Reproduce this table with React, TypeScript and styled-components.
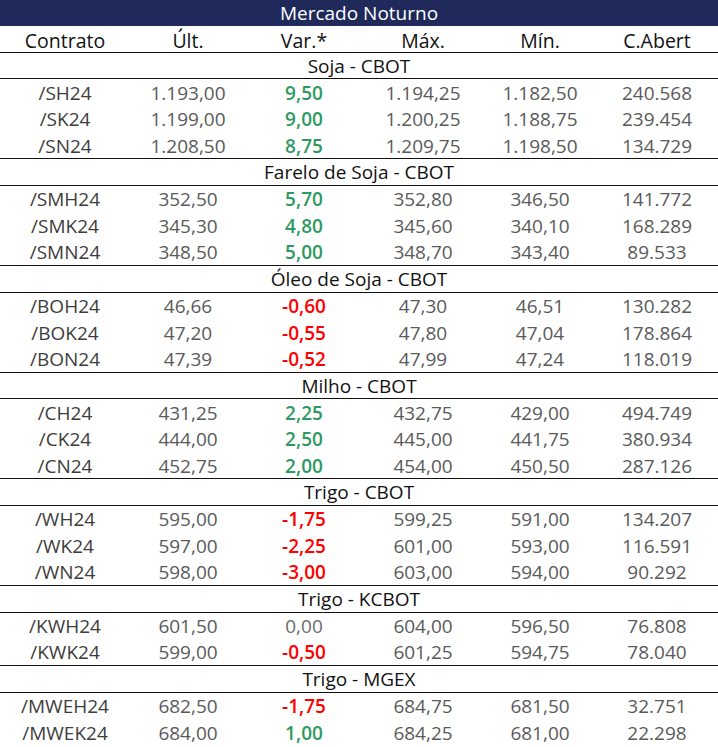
import styled, { createGlobalStyle } from 'styled-components';

const GlobalStyle = createGlobalStyle`
  html, body {
    margin: 0;
    padding: 0;
    background: #fff;
  }
  body {
    font-family: "Open Sans", "Liberation Sans", sans-serif;
  }
`;

type Row = [string, string, string, string, string, string];

const sections: { title: string; rows: Row[] }[] = [
  {
    title: 'Soja - CBOT',
    rows: [
      ['/SH24', '1.193,00', '9,50', '1.194,25', '1.182,50', '240.568'],
      ['/SK24', '1.199,00', '9,00', '1.200,25', '1.188,75', '239.454'],
      ['/SN24', '1.208,50', '8,75', '1.209,75', '1.198,50', '134.729'],
    ],
  },
  {
    title: 'Farelo de Soja - CBOT',
    rows: [
      ['/SMH24', '352,50', '5,70', '352,80', '346,50', '141.772'],
      ['/SMK24', '345,30', '4,80', '345,60', '340,10', '168.289'],
      ['/SMN24', '348,50', '5,00', '348,70', '343,40', '89.533'],
    ],
  },
  {
    title: 'Óleo de Soja - CBOT',
    rows: [
      ['/BOH24', '46,66', '-0,60', '47,30', '46,51', '130.282'],
      ['/BOK24', '47,20', '-0,55', '47,80', '47,04', '178.864'],
      ['/BON24', '47,39', '-0,52', '47,99', '47,24', '118.019'],
    ],
  },
  {
    title: 'Milho - CBOT',
    rows: [
      ['/CH24', '431,25', '2,25', '432,75', '429,00', '494.749'],
      ['/CK24', '444,00', '2,50', '445,00', '441,75', '380.934'],
      ['/CN24', '452,75', '2,00', '454,00', '450,50', '287.126'],
    ],
  },
  {
    title: 'Trigo - CBOT',
    rows: [
      ['/WH24', '595,00', '-1,75', '599,25', '591,00', '134.207'],
      ['/WK24', '597,00', '-2,25', '601,00', '593,00', '116.591'],
      ['/WN24', '598,00', '-3,00', '603,00', '594,00', '90.292'],
    ],
  },
  {
    title: 'Trigo - KCBOT',
    rows: [
      ['/KWH24', '601,50', '0,00', '604,00', '596,50', '76.808'],
      ['/KWK24', '599,00', '-0,50', '601,25', '594,75', '78.040'],
    ],
  },
  {
    title: 'Trigo - MGEX',
    rows: [
      ['/MWEH24', '682,50', '-1,75', '684,75', '681,50', '32.751'],
      ['/MWEK24', '684,00', '1,00', '684,25', '681,00', '22.298'],
    ],
  },
];

const ROW_H = '26.68px';

const Board = styled.div`
  width: 718px;
  height: 747px;
  display: flex;
  flex-direction: column;
  overflow: hidden;
  font-size: 19px;
  line-height: 1;
`;

const TitleBar = styled.div`
  height: 26px;
  flex: none;
  background: #1f2a5b;
  color: #fff;
  display: flex;
  align-items: center;
  justify-content: center;
  font-size: 19px;
  padding-top: 1px;
  box-sizing: border-box;
`;

const Grid = styled.div<{ $line?: boolean }>`
  display: grid;
  grid-template-columns: 130px 116px 116px 122px 112px 122px;
  height: ${ROW_H};
  flex: none;
  box-sizing: border-box;
  align-items: center;
  border-bottom: ${(p) => (p.$line ? '1px solid #111' : 'none')};
`;

const HeadCell = styled.div`
  text-align: center;
  color: #111;
  font-size: 19.5px;
  padding-top: 3px;
`;

const SectionTitle = styled.div`
  height: ${ROW_H};
  flex: none;
  box-sizing: border-box;
  border-bottom: 1px solid #111;
  display: flex;
  align-items: center;
  justify-content: center;
  color: #111;
  padding-top: 1px;
`;

const Cell = styled.div<{ $tone?: 'code' | 'num' | 'up' | 'down' | 'flat' }>`
  text-align: center;
  padding-top: 1px;
  color: ${(p) =>
    p.$tone === 'code'
      ? '#3d3d3d'
      : p.$tone === 'up'
        ? '#2e9a62'
        : p.$tone === 'down'
          ? '#ff0000'
          : p.$tone === 'flat'
            ? '#6b6b6b'
            : '#5a5a5a'};
  font-weight: ${(p) => (p.$tone === 'up' || p.$tone === 'down' ? 600 : 400)};
`;

const varTone = (v: string) => {
  if (v.startsWith('-')) return 'down';
  if (v === '0,00') return 'flat';
  return 'up';
};

export default function App() {
  return (
    <>
      <GlobalStyle />
      <Board>
        <TitleBar>Mercado Noturno</TitleBar>
        <Grid $line>
          {['Contrato', 'Últ.', 'Var.*', 'Máx.', 'Mín.', 'C.Abert'].map((h) => (
            <HeadCell key={h}>{h}</HeadCell>
          ))}
        </Grid>
        {sections.map((s, si) => (
          <div key={s.title} style={{ display: 'contents' }}>
            <SectionTitle>{s.title}</SectionTitle>
            {s.rows.map((r, ri) => (
              <Grid key={r[0]} $line={ri === s.rows.length - 1 && si < sections.length - 1}>
                <Cell $tone="code">{r[0]}</Cell>
                <Cell>{r[1]}</Cell>
                <Cell $tone={varTone(r[2])}>{r[2]}</Cell>
                <Cell>{r[3]}</Cell>
                <Cell>{r[4]}</Cell>
                <Cell>{r[5]}</Cell>
              </Grid>
            ))}
          </div>
        ))}
      </Board>
    </>
  );
}
